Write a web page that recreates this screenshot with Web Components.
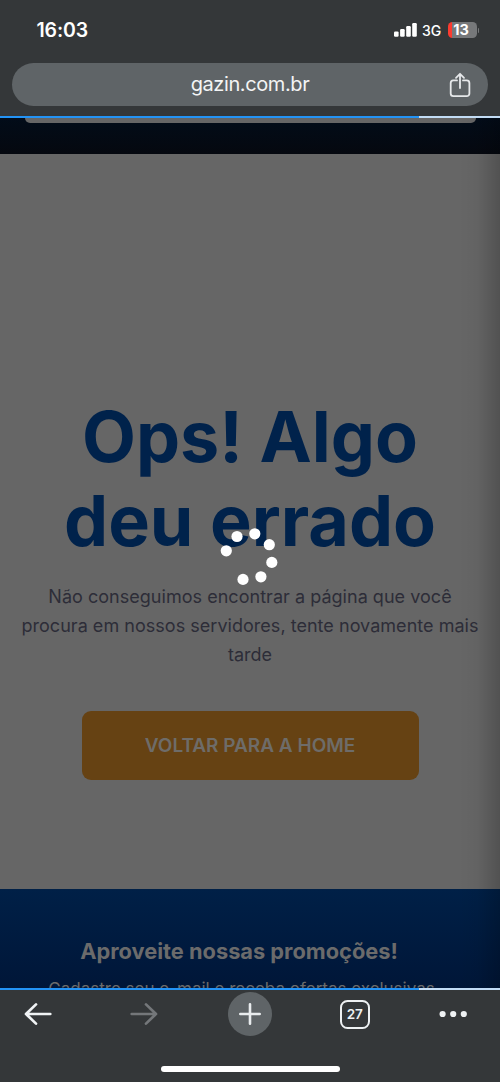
<!DOCTYPE html>
<html lang="pt-BR">
<head>
<meta charset="utf-8">
<title>gazin.com.br</title>
<style>
html,body{margin:0;height:100%;background:#343739;overflow:hidden}
body{font-family:Inter,"Liberation Sans",sans-serif}
</style>
</head>
<body>
<phone-screen></phone-screen>
<script>
const define=(name,html)=>{
  const t=document.createElement('template');
  t.innerHTML=html;
  customElements.define(name,class extends HTMLElement{
    constructor(){super();this.attachShadow({mode:'open'}).append(t.content.cloneNode(true));}
  });
};

define('status-bar',`<style>
:host{display:flex;height:63px;box-sizing:border-box;padding:0 21px 0 36.5px;align-items:center;color:#fff}
.time{font-size:19.5px;font-weight:600;letter-spacing:-.15px;flex:1;line-height:24px;margin-top:-3px}
svg{display:block;margin-top:-3px}
.net{font-size:14px;font-weight:450;margin:-2px 0 0 5px;line-height:18px;width:25.5px;letter-spacing:-.1px}
.bat{display:flex;align-items:center;margin-top:-3px}
.cell{width:29px;height:16px;border-radius:4.5px;background:linear-gradient(90deg,#fc3b30 4px,#76787a 4px);font-size:14.5px;font-weight:700;line-height:16.5px;text-align:center;text-indent:-2px}
.nub{width:1.5px;height:5px;margin-left:1px;border-radius:0 2px 2px 0;background:#76787a}
</style>
<span class="time">16:03</span>
<svg width="23" height="14" viewBox="0 0 23 14" fill="#fff"><rect y="8.4" width="4.6" height="5.4" rx="1.2"/><rect x="6.1" y="6" width="4.6" height="7.8" rx="1.2"/><rect x="12.2" y="3" width="4.6" height="10.8" rx="1.2"/><rect x="18.2" y="0" width="4.6" height="13.8" rx="1.2"/></svg>
<span class="net">3G</span>
<div class="bat"><div class="cell">13</div><div class="nub"></div></div>`);

define('address-bar',`<style>
:host{display:grid;grid-template-columns:40px 1fr 40px;align-items:center;height:43.3px;margin:0 12px 9.7px;border-radius:22px;background:#5f6467;color:#f3f4f5}
.url{text-align:center;font-size:20px;line-height:24px;letter-spacing:-.4px;margin-top:-2px}
svg{display:block;margin-left:-.5px}
</style><span></span><span class="url"><slot></slot></span>
<svg width="24" height="28" viewBox="0 0 24 28" fill="none" stroke="#e6e8ea" stroke-width="1.8" stroke-linecap="round" stroke-linejoin="round"><path d="M9 9.4H5.2A2.7 2.7 0 0 0 2.7 12V22.5A2.7 2.7 0 0 0 5.4 25.2H18.7A2.7 2.7 0 0 0 21.4 22.5V12A2.7 2.7 0 0 0 18.7 9.4H15"/><path d="M12 17V3M8 6.8L12 2.8L16 6.8"/></svg>`);

define('load-bar',`<style>
:host{display:block;height:2.5px;background:linear-gradient(90deg,#2393f5 419px,#c2dcf5 419px);flex:none}
</style>`);

define('site-header',`<style>
:host{display:block;height:36px;padding:0 24.5px;background:linear-gradient(#020c19,#05080f)}
div{height:4.5px;border-radius:0 0 7px 7px;background:#666}
</style><div></div>`);

define('error-message',`<style>
:host{display:flex;flex-direction:column;align-items:center;height:734.5px;box-sizing:border-box;padding-top:241px;background:#666;text-align:center}
h1{margin:0;font-size:70px;line-height:84px;font-weight:700;color:#00224b;white-space:nowrap}
p{margin:19px 0 42px;font-size:18px;line-height:29px;letter-spacing:.03px;color:#2d2d38;white-space:nowrap}
button{width:337px;height:69px;border:0;border-radius:9px;background:#664213;color:#6e6c69;font:600 19px/24px Inter,"Liberation Sans",sans-serif;padding:0}
</style>
<h1>Ops! Algo<br>deu errado</h1>
<p>Não conseguimos encontrar a página que você<br>procura em nossos servidores, tente novamente mais<br>tarde</p>
<button><span>VOLTAR PARA A HOME</span></button>`);

define('promo-footer',`<style>
:host{display:block;height:99px;overflow:hidden;box-sizing:border-box;padding:48px 22px 0 0;background:linear-gradient(#002047,#001638);color:#6b6b6b;text-align:center;white-space:nowrap}
h2{margin:0;font-size:21.8px;line-height:28px;font-weight:700}
p{margin:11px 0 0 5px;font-size:17px;line-height:26px}
</style><h2>Aproveite nossas promoções!</h2><p><span>Cadastre seu e-mail e receba ofertas exclusivas</span></p>`);

define('dot-spinner',`<style>
:host{position:absolute;left:218px;top:526px}svg{display:block}
</style><svg width="64" height="64" fill="#fff"><circle cx="19" cy="10.5" r="5.6"/><circle cx="36.8" cy="7.8" r="5.6"/><circle cx="51.3" cy="18.7" r="5.6"/><circle cx="8.3" cy="24.8" r="5.6"/><circle cx="53.8" cy="36.4" r="5.6"/><circle cx="42.9" cy="50.8" r="5.6"/><circle cx="25" cy="53.4" r="5.6"/></svg>`);

define('edge-shade',`<style>
:host{position:absolute;right:0;top:118.5px;width:42px;height:869.5px;background:linear-gradient(90deg,transparent,rgba(0,0,0,.03) 45%,rgba(0,0,0,.2))}
</style>`);

define('tool-bar',`<style>
:host{display:block;height:91.5px;background:#343739}
nav{display:grid;grid-template-columns:106px 99px 112px 98.5px 28px;align-items:center;height:48px;padding-left:23px}
svg{display:block}
.plus{width:44px;height:44px;border-radius:50%;background:#5f6467;display:grid;place-items:center}
.tabs{width:29.5px;height:29.5px;box-sizing:border-box;border:2.3px solid #eef1f3;border-radius:7.5px;color:#eef1f3;font-size:13.5px;font-weight:600;line-height:25.5px;text-align:center}
.home{width:179px;height:6px;border-radius:3px;background:#fff;margin:27.5px auto 0}
</style>
<nav>
<svg width="30" height="26" fill="none" stroke="#f0f3f5" stroke-width="2.7" stroke-linecap="round" stroke-linejoin="round"><path d="M27.3 13H3M13 3.4L3 13L13 22.6"/></svg>
<svg width="30" height="26" fill="none" stroke="#74777a" stroke-width="2.7" stroke-linecap="round" stroke-linejoin="round"><path d="M2.7 13H27M17 3.4L27 13L17 22.6"/></svg>
<div class="plus"><svg width="24" height="24" stroke="#e9ecee" stroke-width="2.6" stroke-linecap="round"><path d="M2.3 12H21.7M12 2.3V21.7"/></svg></div>
<div class="tabs">27</div>
<svg width="28" height="8" fill="#eef1f3"><circle cx="3.6" cy="4" r="3.1"/><circle cx="14.2" cy="4" r="3.1"/><circle cx="24.8" cy="4" r="3.1"/></svg>
</nav>
<div class="home"></div>`);

define('phone-screen',`<style>
:host{display:flex;flex-direction:column;width:500px;height:1082px;position:relative;overflow:hidden;background:#343739}
:host>*{flex:none}
</style>
<status-bar></status-bar>
<address-bar>gazin.com.br</address-bar>
<load-bar></load-bar>
<site-header></site-header>
<error-message></error-message>
<promo-footer></promo-footer>
<load-bar></load-bar>
<tool-bar></tool-bar>
<edge-shade></edge-shade>
<dot-spinner></dot-spinner>`);
</script>
</body>
</html>
